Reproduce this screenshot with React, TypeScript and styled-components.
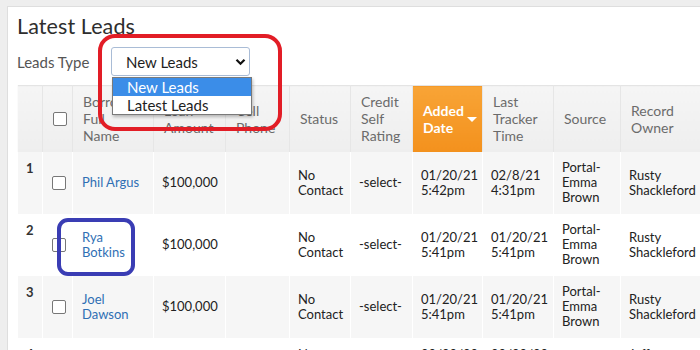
import React from 'react';
import styled, { createGlobalStyle } from 'styled-components';

const GlobalStyle = createGlobalStyle`
	html, body {
		margin: 0;
		padding: 0;
		background: #eeeeee;
		overflow: hidden;
	}
	body {
		font-family: Lato, 'Liberation Sans', sans-serif;
	}
`;

interface Column {
	key: string;
	label: string[];
	width: number;
	active?: boolean;
}

const columns: Column[] = [
	{ key: 'num', label: [], width: 25 },
	{ key: 'check', label: [], width: 30 },
	{ key: 'name', label: ['Borrower', 'Full', 'Name'], width: 81 },
	{ key: 'amount', label: ['Loan', 'Amount'], width: 72 },
	{ key: 'phone', label: ['Cell', 'Phone'], width: 64 },
	{ key: 'status', label: ['Status'], width: 61 },
	{ key: 'rating', label: ['Credit', 'Self', 'Rating'], width: 62 },
	{ key: 'added', label: ['Added', 'Date'], width: 70, active: true },
	{ key: 'tracker', label: ['Last', 'Tracker', 'Time'], width: 71 },
	{ key: 'source', label: ['Source'], width: 67 },
	{ key: 'owner', label: ['Record', 'Owner'], width: 100 },
];

interface Lead {
	name: string[];
	amount: string;
	status: string[];
	rating: string;
	added: string[];
	tracker: string[];
	source: string[];
	owner: string[];
	partial?: boolean;
}

const leads: Lead[] = [
	{
		name: ['Phil Argus'],
		amount: '$100,000',
		status: ['No', 'Contact'],
		rating: '-select-',
		added: ['01/20/21', '5:42pm'],
		tracker: ['02/8/21', '4:31pm'],
		source: ['Portal-', 'Emma', 'Brown'],
		owner: ['Rusty', 'Shackleford'],
	},
	{
		name: ['Rya', 'Botkins'],
		amount: '$100,000',
		status: ['No', 'Contact'],
		rating: '-select-',
		added: ['01/20/21', '5:41pm'],
		tracker: ['01/20/21', '5:41pm'],
		source: ['Portal-', 'Emma', 'Brown'],
		owner: ['Rusty', 'Shackleford'],
	},
	{
		name: ['Joel', 'Dawson'],
		amount: '$100,000',
		status: ['No', 'Contact'],
		rating: '-select-',
		added: ['01/20/21', '5:41pm'],
		tracker: ['01/20/21', '5:41pm'],
		source: ['Portal-', 'Emma', 'Brown'],
		owner: ['Rusty', 'Shackleford'],
	},
	{
		name: [],
		amount: '',
		status: ['No', 'Contact'],
		rating: '',
		added: ['00/00/00', '0:00pm'],
		tracker: ['00/00/00', '0:00pm'],
		source: [],
		owner: ['Jeff', 'Shackleford'],
		partial: true,
	},
];

function Lines({ lines }: { lines: string[] }) {
	return (
		<>
			{lines.map((line, i) => (
				<Line key={i}>{line}</Line>
			))}
		</>
	);
}

function App() {
	return (
		<>
			<GlobalStyle />
			<Page>
				<Card>
					<Title>Latest Leads</Title>
					<FilterRow>
						<FilterLabel>Leads Type</FilterLabel>
						<SelectBox>
							<span>New Leads</span>
							<svg width="11" height="8" viewBox="0 0 11 8">
								<polyline points="1.5,1.8 5.5,5.8 9.5,1.8" fill="none" stroke="#111" strokeWidth="2.2" />
							</svg>
							<OptionList>
								<Option $selected>New Leads</Option>
								<Option>Latest Leads</Option>
							</OptionList>
						</SelectBox>
					</FilterRow>

					<Table>
						<colgroup>
							{columns.map((c) => (
								<col key={c.key} style={{ width: c.width }} />
							))}
						</colgroup>
						<thead>
							<tr>
								{columns.map((c) => (
									<HeadCell key={c.key} $active={c.active}>
										{c.key === 'check' ? (
											<CheckBox />
										) : c.active ? (
											<ActiveHead>
												<div>
													<Lines lines={c.label} />
												</div>
												<Caret />
											</ActiveHead>
										) : (
											<Lines lines={c.label} />
										)}
									</HeadCell>
								))}
							</tr>
						</thead>
						<tbody>
							{leads.map((lead, i) => (
								<Row key={i} $odd={i % 2 === 0} $top={lead.partial}>
									<NumCell>{i + 1}</NumCell>
									<CheckCell>
										<CheckBox />
									</CheckCell>
									<Cell>
										<NameLink>
											<Lines lines={lead.name} />
										</NameLink>
									</Cell>
									<Cell>{lead.amount}</Cell>
									<Cell />
									<Cell>
										<Lines lines={lead.status} />
									</Cell>
									<Cell>{lead.rating}</Cell>
									<Cell>
										<Lines lines={lead.added} />
									</Cell>
									<Cell>
										<Lines lines={lead.tracker} />
									</Cell>
									<Cell>
										<Lines lines={lead.source} />
									</Cell>
									<Cell>
										<Lines lines={lead.owner} />
									</Cell>
								</Row>
							))}
						</tbody>
					</Table>
				</Card>

				<Highlight $color="#e21d26" $left={98} $top={34} $width={184} $height={97} $radius={17} />
				<Highlight $color="#3a3db4" $left={57} $top={218} $width={78} $height={58} $radius={11} />
			</Page>
		</>
	);
}

export default App;

const Page = styled.div`
	position: relative;
	height: 350px;
	padding: 6px 0 0 7px;
	box-sizing: border-box;
	overflow: hidden;
`;

const Card = styled.div`
	height: 360px;
	background: #ffffff;
	border: 1px solid #dedede;
	border-right: none;
	padding: 7px 0 0 9px;
	overflow: hidden;
`;

const Title = styled.h1`
	margin: 0;
	font-size: 21.5px;
	line-height: 24px;
	font-weight: 400;
	color: #2e2e2e;
	letter-spacing: 0.1px;
`;

const FilterRow = styled.div`
	display: flex;
	align-items: center;
	height: 29px;
	margin-top: 9px;
`;

const FilterLabel = styled.span`
	width: 94px;
	font-size: 15px;
	color: #555555;
`;

const SelectBox = styled.div`
	position: relative;
	display: flex;
	align-items: center;
	justify-content: space-between;
	width: 139px;
	height: 29px;
	box-sizing: border-box;
	padding: 0 3px 0 14px;
	border: 1px solid #a9bcd6;
	border-radius: 3px;
	background: #ffffff;
	font-size: 15px;
	color: #1e1e1e;
	z-index: 2;
`;

const OptionList = styled.div`
	position: absolute;
	top: 29px;
	left: 0;
	width: 140px;
	box-sizing: border-box;
	border: 1px solid #7a7a7a;
	background: #ffffff;
	box-shadow: 1px 2px 3px rgba(0, 0, 0, 0.25);
`;

const Option = styled.div<{ $selected?: boolean }>`
	height: 18px;
	line-height: 18px;
	padding-left: 14px;
	font-size: 15px;
	color: ${({ $selected }) => ($selected ? '#ffffff' : '#1e1e1e')};
	background: ${({ $selected }) => ($selected ? '#3b8de8' : 'transparent')};
`;

const Table = styled.table`
	table-layout: fixed;
	width: 703px;
	margin-top: 9px;
	border-collapse: collapse;
	border-top: 1px solid #e4e4e4;
	font-size: 13px;
	line-height: 15px;
	color: #222222;
`;

const HeadCell = styled.th<{ $active?: boolean }>`
	height: 66px;
	box-sizing: border-box;
	padding: 0 6px 0 10px;
	text-align: left;
	vertical-align: middle;
	font-size: 14px;
	line-height: 17px;
	font-weight: ${({ $active }) => ($active ? 700 : 400)};
	color: ${({ $active }) => ($active ? '#ffffff' : '#6b6b6b')};
	background: ${({ $active }) =>
		$active ? 'linear-gradient(#f8a436, #f3911d)' : 'linear-gradient(#f5f5f5, #eeeeee)'};
	border-left: 1px solid #fbfbfb;
	border-right: 1px solid #e6e6e6;
`;

const ActiveHead = styled.div`
	display: flex;
	align-items: center;
	gap: 3px;
`;

const Caret = styled.span`
	width: 0;
	height: 0;
	margin-top: 2px;
	border-left: 5px solid transparent;
	border-right: 5px solid transparent;
	border-top: 5px solid #ffffff;
`;

const Line = styled.div`
	white-space: nowrap;
`;

const Row = styled.tr<{ $odd: boolean; $top?: boolean }>`
	background: ${({ $odd }) => ($odd ? '#f6f6f6' : '#ffffff')};

	& > td:nth-child(n + 3) {
		vertical-align: ${({ $top }) => ($top ? 'top' : 'middle')};
		padding-top: ${({ $top }) => ($top ? '9px' : '0')};
	}
`;

const Cell = styled.td`
	height: 62px;
	box-sizing: border-box;
	padding: 0 4px 0 8px;
	vertical-align: middle;
	border-left: 1px solid #ffffff;
	border-right: 1px solid #ffffff;
`;

const NumCell = styled(Cell)`
	font-weight: 700;
	color: #333333;
	vertical-align: top;
	padding-top: 9px;
`;

const CheckCell = styled(Cell)`
	padding: 0 0 0 9px;
`;

const CheckBox = styled.span`
	display: block;
	width: 12px;
	height: 12px;
	border: 1px solid #777777;
	border-radius: 2px;
	background: #ffffff;
`;

const NameLink = styled.a`
	display: block;
	color: #2f6fb4;
	text-decoration: none;
	padding-left: 1px;
`;

const Highlight = styled.div<{
	$color: string;
	$left: number;
	$top: number;
	$width: number;
	$height: number;
	$radius: number;
}>`
	position: absolute;
	left: ${({ $left }) => $left}px;
	top: ${({ $top }) => $top}px;
	width: ${({ $width }) => $width}px;
	height: ${({ $height }) => $height}px;
	box-sizing: border-box;
	border: 4px solid ${({ $color }) => $color};
	border-radius: ${({ $radius }) => $radius}px;
	z-index: 5;
	pointer-events: none;
`;
